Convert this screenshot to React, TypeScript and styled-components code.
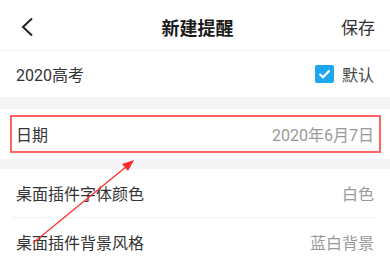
import React from 'react'
import styled, { createGlobalStyle } from 'styled-components'

const GlobalStyle = createGlobalStyle`
  html, body {
    margin: 0;
    padding: 0;
    background: #ffffff;
  }
  body {
    font-family: Roboto, "Noto Sans CJK SC", "Noto Sans", sans-serif;
    color: #333333;
  }
`

const Page = styled.div`
  position: relative;
  width: 390px;
  height: 260px;
  overflow: hidden;
  background: #ffffff;
`

const Header = styled.div`
  height: 51px;
  display: grid;
  grid-template-columns: 80px 1fr 80px;
  align-items: center;
  padding: 3px 15px 0 20px;
  box-sizing: border-box;
  border-bottom: 1px solid #f2f2f2;
`

const BackButton = styled.div`
  display: flex;
  align-items: center;
  color: #222222;
`

const Title = styled.div`
  text-align: center;
  font-size: 18px;
  font-weight: 700;
  color: #1a1a1a;
`

const Action = styled.div`
  text-align: right;
  font-size: 17px;
  color: #333333;
`

const Row = styled.div<{ $height: number }>`
  position: relative;
  height: ${({ $height }) => $height}px;
  display: flex;
  align-items: center;
  justify-content: space-between;
  padding: 0 16px;
  box-sizing: border-box;
  font-size: 16px;
`

const Divider = styled.div`
  height: 1px;
  margin: 0 12px;
  background: #f2f2f2;
`

const Gap = styled.div<{ $height: number }>`
  height: ${({ $height }) => $height}px;
  background: #f5f5f5;
`

const Label = styled.span`
  color: #333333;
`

const Value = styled.span`
  color: #999999;
`

const CheckWrap = styled.div`
  display: flex;
  align-items: center;
  gap: 8px;
  color: #444444;
`

const CheckBox = styled.div`
  width: 19px;
  height: 18px;
  border-radius: 2px;
  background: #1ea7ee;
  display: flex;
  align-items: center;
  justify-content: center;
`

const Highlight = styled.div`
  position: absolute;
  top: 6px;
  left: 10px;
  right: 9px;
  bottom: 6px;
  border: 2px solid #ff6464;
  box-sizing: border-box;
`

const Arrow = styled.svg`
  position: absolute;
  left: 0;
  top: 0;
  pointer-events: none;
`

export default function App() {
  return (
    <Page>
      <GlobalStyle />
      <Header>
        <BackButton>
          <svg width="14" height="20" viewBox="0 0 14 20">
            <path d="M12 1.5 L3 10 L12 18.5" fill="none" stroke="#222" strokeWidth="2" />
          </svg>
        </BackButton>
        <Title>新建提醒</Title>
        <Action>保存</Action>
      </Header>
      <Row $height={46}>
        <Label>2020高考</Label>
        <CheckWrap>
          <CheckBox>
            <svg width="13" height="10" viewBox="0 0 13 10">
              <path d="M1.5 5 L5 8.3 L11.5 1.5" fill="none" stroke="#fff" strokeWidth="2.2" />
            </svg>
          </CheckBox>
          默认
        </CheckWrap>
      </Row>
      <Gap $height={12} />
      <Row $height={50}>
        <Label>日期</Label>
        <Value>2020年6月7日</Value>
        <Highlight />
      </Row>
      <Gap $height={10} />
      <Row $height={48}>
        <Label>桌面插件字体颜色</Label>
        <Value>白色</Value>
      </Row>
      <Divider />
      <Row $height={48}>
        <Label>桌面插件背景风格</Label>
        <Value>蓝白背景</Value>
      </Row>
      <Arrow width="390" height="260" viewBox="0 0 390 260">
        <line x1="33" y1="243" x2="127" y2="166" stroke="#ff2a2a" strokeWidth="1.2" />
        <polygon points="134,160 122,164 128,171" fill="#ff2a2a" />
      </Arrow>
    </Page>
  )
}
